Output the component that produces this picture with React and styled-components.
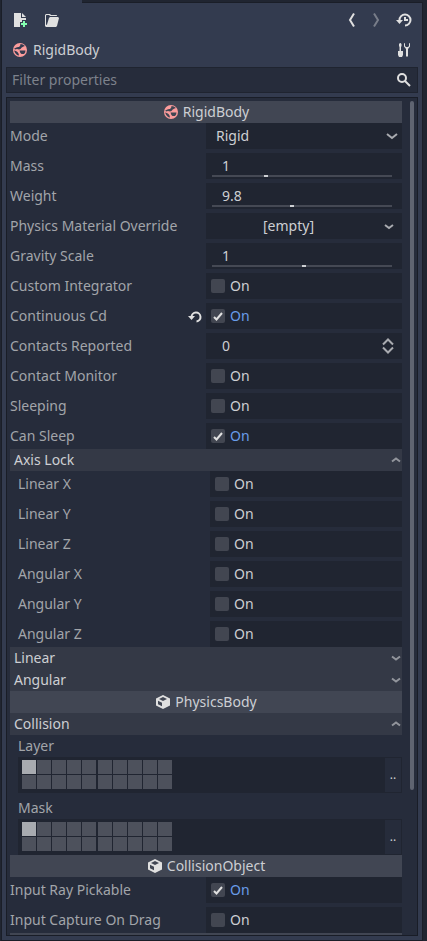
import React, { useState } from "react";
import styled, { createGlobalStyle } from "styled-components";

const Global = createGlobalStyle`
  * { box-sizing: border-box; }
  body { margin: 0; background: #202531; }
  body, button, input, select {
    font-family: "Noto Sans", "Open Sans", sans-serif;
    font-size: 14px;
    line-height: 18px;
    color: #cdcfd3;
  }
  button, input, select { margin: 0; padding: 0; border: 0; background: none; border-radius: 0; }
`;

const Dock = styled.div`
  display: flex;
  flex-direction: column;
  height: 100vh;
  padding: 0 4px 0 1px;
`;

const TabStrip = styled.div`
  height: 3px;
  border-left: 1px solid #1a1e28;
  border-bottom: 1px solid #1a1e28;
  flex: none;
`;

const ActiveTab = styled.div`
  width: 80px;
  height: 3px;
  background: #333b4f;
`;

const Panel = styled.main`
  flex: 1;
  min-height: 0;
  display: flex;
  flex-direction: column;
  padding: 0 4px 4px;
  background: #333b4f;
  border: 1px solid #1a1e28;
  border-top: 0;
`;

const Toolbar = styled.header`
  display: flex;
  align-items: center;
  gap: 12px;
  height: 34px;
  padding: 0 6px;
`;

const ToolGroup = styled.div`
  display: flex;
  gap: ${(p) => p.$gap}px;
  margin-left: ${(p) => (p.$end ? "auto" : "0")};
`;

const IconButton = styled.button`
  display: flex;
  &:disabled { opacity: 0.4; }
`;

const ObjectBar = styled.div`
  display: flex;
  align-items: center;
  gap: 5px;
  height: 26px;
  padding: 0 6px;
`;

const ObjectName = styled.h1`
  flex: 1;
  margin: 0;
  font-size: 14px;
  font-weight: 400;
`;

const Search = styled.label`
  display: flex;
  align-items: center;
  flex: none;
  height: 26px;
  margin: 4px 0;
  padding: 0 5px;
  background: #262c3b;
  border: 1px solid #1f2430;
`;

const SearchInput = styled.input`
  flex: 1;
  min-width: 0;
  height: 18px;
  outline: 0;
  &::placeholder { color: #7d828c; opacity: 1; }
`;

const Inspector = styled.section`
  flex: 1;
  min-height: 0;
  display: flex;
  gap: 8px;
  padding: 3px 3px 0;
  overflow: hidden;
  background: #262c3b;
  border: 1px solid #191d27;
`;

const Properties = styled.div`
  flex: 1;
  min-width: 0;
`;

const ScrollTrack = styled.div`
  width: 4px;
  padding-bottom: 4px;
`;

const ScrollThumb = styled.div`
  width: 4px;
  height: 83%;
  border-radius: 2px;
  background: #5f6471;
`;

const Category = styled.h2`
  display: flex;
  align-items: center;
  justify-content: center;
  gap: 4px;
  height: 22px;
  margin: 0;
  font-size: 14px;
  font-weight: 400;
  background: #414653;
`;

const SectionButton = styled.button`
  display: flex;
  align-items: center;
  justify-content: space-between;
  width: 100%;
  height: 22px;
  padding: 0 0 0 4px;
  background: #343946;
`;

const Rows = styled.div`
  display: flex;
  flex-direction: column;
  gap: 4px;
  padding-left: ${(p) => (p.$nested ? 8 : 0)}px;
`;

const Row = styled.div`
  display: grid;
  grid-template-columns: 1fr 1fr;
  height: 26px;
`;

const RowLabel = styled.label`
  display: flex;
  align-items: center;
  justify-content: space-between;
  padding-right: 3px;
  color: #a2a5aa;
  white-space: nowrap;
`;

const Field = styled.div`
  display: flex;
  align-items: center;
  min-width: 0;
  background: #202531;
`;

const CheckField = styled.label`
  display: flex;
  align-items: center;
  gap: 5px;
  padding-left: 5px;
  background: #202531;
  color: ${(p) => (p.$on ? "#699ce8" : "#cdcfd3")};
`;

const CheckBox = styled.input`
  position: absolute;
  inset: 0;
  width: 14px;
  height: 14px;
  appearance: none;
  border-radius: 2px;
  background: #424651;
`;

const CheckWrap = styled.span`
  position: relative;
  width: 14px;
  height: 14px;
  svg { position: absolute; inset: 0; pointer-events: none; }
`;

const SelectField = styled(Field)`
  position: relative;
  svg { position: absolute; right: 4px; pointer-events: none; }
`;

const Select = styled.select`
  width: 100%;
  height: 18px;
  padding-left: 10px;
  appearance: none;
  outline: 0;
`;

const SliderField = styled(Field)`
  flex-direction: column;
  align-items: stretch;
  padding: 4px 10px 2px 6px;
`;

const NumberInput = styled.input`
  flex: 1;
  min-width: 0;
  height: 18px;
  padding-left: ${(p) => p.$inset}px;
  outline: 0;
`;

const Slider = styled.input`
  display: block;
  width: 100%;
  height: 2px;
  appearance: none;
  background: #454954;
  &::-webkit-slider-thumb {
    appearance: none;
    width: 4px;
    height: 2px;
    background: #cdcfd3;
  }
`;

const ResourceButton = styled.button`
  flex: 1;
  height: 26px;
`;

const ResourceMenu = styled.button`
  display: flex;
  align-items: center;
  justify-content: flex-end;
  width: 31px;
  height: 26px;
  padding-right: 7px;
`;

const Stepper = styled.button`
  display: flex;
  padding-right: 6px;
`;

const LayerBlock = styled.fieldset`
  margin: 0;
  padding: 0;
  border: 0;
  min-width: 0;
`;

const LayerName = styled.legend`
  height: 22px;
  padding: 0;
  line-height: 22px;
  color: #a2a5aa;
`;

const LayerField = styled.div`
  display: flex;
  justify-content: space-between;
  height: 36px;
  padding: 1px 1px 1px 4px;
  background: #202531;
`;

const LayerGroups = styled.div`
  display: flex;
  gap: 2px;
  padding-top: 2px;
`;

const LayerGroup = styled.div`
  display: grid;
  grid-template-columns: repeat(5, 14px);
  grid-auto-rows: 14px;
  gap: 1px;
`;

const LayerCell = styled.input`
  width: 14px;
  height: 14px;
  margin: 0;
  appearance: none;
  background: #4d515c;
  &:checked { background: #a8abb0; }
`;

const MoreButton = styled.button`
  width: 16px;
  background: #262c3b;
  font-size: 12px;
`;

function Icon({ size = 16, children }) {
  return (
    <svg width={size} height={size} viewBox={`0 0 ${size} ${size}`} fill="#e0e0e0" aria-hidden="true">
      {children}
    </svg>
  );
}

const NewIcon = () => (
  <Icon>
    <path d="M2 1v14h6v-2H8v-3h2V8h4V6H9V1zm8 0v4h4z" />
    <path fill="#84ffb1" d="M11 9v2H9v2h2v2h2v-2h2v-2h-2V9z" />
  </Icon>
);

const FolderIcon = () => (
  <Icon>
    <path d="M2 2 1 3v11l1 1h10l1-1 2-8-1-1H6L5 6 3 12.500 2 13V3.500L2.500 3H5l1 1h7V3.500L12.500 3H7L6 2z" />
  </Icon>
);

const BodyIcon = ({ gap = "#333b4f" }) => (
  <Icon>
    <circle cx="8" cy="8" r="7" fill="#fc9c9c" />
    <path
      fill={gap}
      d="M8.500 2q2.500 0 4.500 2l-1.500.5Q9.500 5 8.500 7L7 7.500Q5 6.500 3 7.500l-.8-1Q5 4.500 7 5 8.500 4 8.500 2zM7.500 8.500h6q0 2-1.500 3.500H9.500Q8 11 7.500 8.500zM2 8.500q2 0 3.500 1.500T7 13.500Q4 13.500 2 8.500z"
    />
  </Icon>
);

const CubeIcon = () => (
  <Icon>
    <path d="M8 1 1 4.500v7L8 15l7-3.500v-7z" />
    <path fill="#414653" d="M8 3 4 4.900 8 7l4-2.100zM3 6.800v3.500l4 2V8.800z" />
  </Icon>
);

const Stroke = ({ size, d, color = "#e0e0e0", width = 2 }) => (
  <Icon size={size}>
    <path d={d} fill="none" stroke={color} strokeWidth={width} />
  </Icon>
);

const HistoryIcon = () => (
  <Icon>
    <path d="M3.500 8a5.500 5.500 0 1 1 5.500 5.500" fill="none" stroke="#e0e0e0" strokeWidth="2" />
    <path d="M0 8h7l-3.500 4zM8 5h2v2h2v2H8z" />
  </Icon>
);

const RevertIcon = () => (
  <Icon>
    <path d="M4.500 9a4.500 4.500 0 1 1 5 4.500" fill="none" stroke="#e0e0e0" strokeWidth="2" />
    <path d="M1 8h7l-3.500 4z" />
  </Icon>
);

const ToolsIcon = () => (
  <Icon>
    <path d="M4 1 3 2v2l.5 1v4H2v4l1 2h3l1-2V9H5V5l.5-1V2l-1-1zM8 1v3.500L10 7v7l1 1 1-1V7l2-2.500V1l-1 .5V4l-1 1h-2L9 4V1.500z" />
  </Icon>
);

const SearchIcon = () => (
  <Icon>
    <circle cx="6" cy="6" r="4" fill="none" stroke="#e0e0e0" strokeWidth="2" />
    <path d="m9 9 5 5" stroke="#e0e0e0" strokeWidth="2" />
  </Icon>
);

const FoldIcon = ({ open }) => (
  <Stroke size={12} color="#92959c" d={open ? "m2 7.500 4-3 4 3" : "m2 4.500 4 3 4-3"} />
);

function CheckControl({ id, initial }) {
  const [on, setOn] = useState(Boolean(initial));
  return (
    <CheckField htmlFor={id} $on={on}>
      <CheckWrap>
        <CheckBox id={id} type="checkbox" checked={on} onChange={(e) => setOn(e.target.checked)} />
        {on && <Stroke size={14} d="m3 8 2.500 2.500L11 4" />}
      </CheckWrap>
      On
    </CheckField>
  );
}

function SliderControl({ id, label, value, position }) {
  return (
    <SliderField>
      <NumberInput id={id} $inset={10} defaultValue={value} />
      <Slider type="range" min="0" max="1" step="any" defaultValue={position} aria-label={`${label} slider`} />
    </SliderField>
  );
}

function Property({ label, changed, children }) {
  const id = label.toLowerCase().replace(/ /g, "-");
  return (
    <Row>
      <RowLabel htmlFor={id}>
        {label}
        {changed && (
          <IconButton aria-label={`Revert ${label}`}>
            <RevertIcon />
          </IconButton>
        )}
      </RowLabel>
      {children(id)}
    </Row>
  );
}

const CheckProperty = ({ label, on, changed }) => (
  <Property label={label} changed={changed}>
    {(id) => <CheckControl id={id} initial={on} />}
  </Property>
);

const SliderProperty = ({ label, value, position }) => (
  <Property label={label}>
    {(id) => <SliderControl id={id} label={label} value={value} position={position} />}
  </Property>
);

function Section({ title, open: initial, children }) {
  const [open, setOpen] = useState(Boolean(initial));
  return (
    <>
      <SectionButton aria-expanded={open} onClick={() => setOpen(!open)}>
        {title}
        <FoldIcon open={open} />
      </SectionButton>
      {open && <Rows $nested>{children}</Rows>}
    </>
  );
}

function LayerProperty({ name }) {
  return (
    <LayerBlock>
      <LayerName>{name}</LayerName>
      <LayerField>
        <LayerGroups>
          {[0, 5].map((start) => (
            <LayerGroup key={start}>
              {[0, 1, 2, 3, 4, 10, 11, 12, 13, 14].map((n) => (
                <LayerCell
                  key={n}
                  type="checkbox"
                  defaultChecked={start + n === 0}
                  aria-label={`${name} ${start + n + 1}`}
                />
              ))}
            </LayerGroup>
          ))}
        </LayerGroups>
        <MoreButton aria-label={`${name} names`}>..</MoreButton>
      </LayerField>
    </LayerBlock>
  );
}

export default function App() {
  return (
    <>
      <Global />
      <Dock>
        <TabStrip>
          <ActiveTab />
        </TabStrip>
        <Panel>
          <Toolbar>
            <ToolGroup $gap={16}>
              <IconButton aria-label="New resource"><NewIcon /></IconButton>
              <IconButton aria-label="Load resource"><FolderIcon /></IconButton>
            </ToolGroup>
            <ToolGroup $gap={8} $end>
              <IconButton aria-label="Previous object"><Stroke size={16} d="m10 1.500-4 6.500 4 6.500" /></IconButton>
              <IconButton aria-label="Next object" disabled><Stroke size={16} d="m6 1.500 4 6.500-4 6.500" /></IconButton>
            </ToolGroup>
            <ToolGroup $gap={0}>
              <IconButton aria-label="History"><HistoryIcon /></IconButton>
            </ToolGroup>
          </Toolbar>
          <ObjectBar>
            <BodyIcon />
            <ObjectName>RigidBody</ObjectName>
            <IconButton aria-label="Object tools"><ToolsIcon /></IconButton>
          </ObjectBar>
          <Search>
            <SearchInput placeholder="Filter properties" aria-label="Filter properties" />
            <SearchIcon />
          </Search>
          <Inspector>
            <Properties>
              <Category><BodyIcon gap="#414653" />RigidBody</Category>
              <Rows>
                <Property label="Mode">
                  {(id) => (
                    <SelectField>
                      <Select id={id} defaultValue="Rigid">
                        <option>Rigid</option>
                        <option>Static</option>
                      </Select>
                      <Stroke size={12} color="#a9abb0" d="m1 4 5 4 5-4" />
                    </SelectField>
                  )}
                </Property>
                <SliderProperty label="Mass" value="1" position={0.295} />
                <SliderProperty label="Weight" value="9.8" position={0.443} />
                <Property label="Physics Material Override">
                  {(id) => (
                    <Field>
                      <ResourceButton id={id}>[empty]</ResourceButton>
                      <ResourceMenu aria-label="Resource menu">
                        <Stroke size={12} color="#a9abb0" d="m2 5 4 3 4-3" />
                      </ResourceMenu>
                    </Field>
                  )}
                </Property>
                <SliderProperty label="Gravity Scale" value="1" position={0.511} />
                <CheckProperty label="Custom Integrator" />
                <CheckProperty label="Continuous Cd" on changed />
                <Property label="Contacts Reported">
                  {(id) => (
                    <Field>
                      <NumberInput id={id} $inset={16} defaultValue="0" />
                      <Stepper aria-label="Change value">
                        <Stroke size={16} color="#a9abb0" d="m3 6.500 5-5 5 5M3 9.500l5 5 5-5" />
                      </Stepper>
                    </Field>
                  )}
                </Property>
                <CheckProperty label="Contact Monitor" />
                <CheckProperty label="Sleeping" />
                <CheckProperty label="Can Sleep" on />
              </Rows>
              <Section title="Axis Lock" open>
                {["Linear X", "Linear Y", "Linear Z", "Angular X", "Angular Y", "Angular Z"].map((label) => (
                  <CheckProperty key={label} label={label} />
                ))}
              </Section>
              <Section title="Linear" />
              <Section title="Angular" />
              <Category><CubeIcon />PhysicsBody</Category>
              <Section title="Collision" open>
                <LayerProperty name="Layer" />
                <LayerProperty name="Mask" />
              </Section>
              <Category><CubeIcon />CollisionObject</Category>
              <Rows>
                <CheckProperty label="Input Ray Pickable" on />
                <CheckProperty label="Input Capture On Drag" />
              </Rows>
              <Category />
            </Properties>
            <ScrollTrack>
              <ScrollThumb />
            </ScrollTrack>
          </Inspector>
        </Panel>
      </Dock>
    </>
  );
}
